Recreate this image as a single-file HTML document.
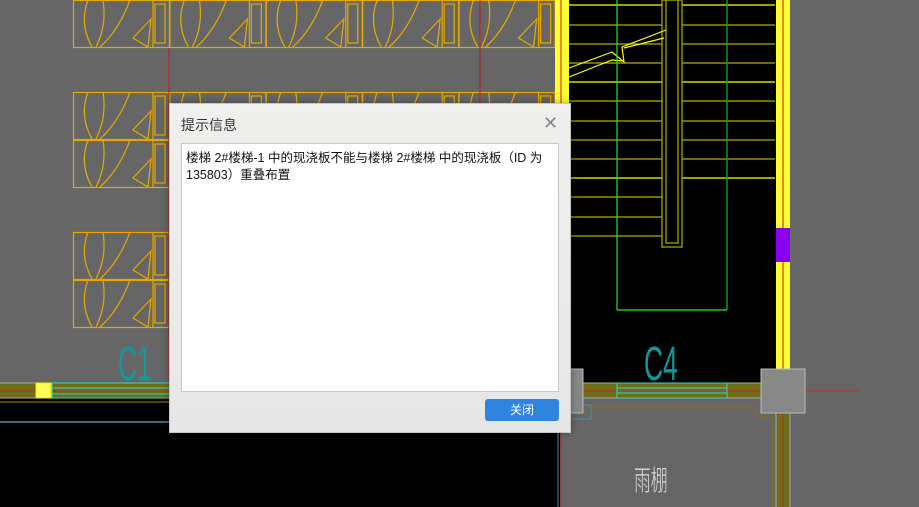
<!DOCTYPE html>
<html><head><meta charset="utf-8"><style>
html,body{margin:0;padding:0;width:919px;height:507px;overflow:hidden;background:#666;}
svg{position:absolute;left:0;top:0}
.dlg{position:absolute;left:169px;top:103px;width:400px;height:328px;background:linear-gradient(#efefed,#e6e6e6);border:1px solid #c6c6c6;box-shadow:0 0 8px rgba(0,0,0,.35);font-family:"Liberation Sans","Noto Sans CJK SC",sans-serif;}
.title{position:absolute;left:11px;top:11px;font-size:14px;color:#333;}
.x{position:absolute;left:373px;top:9px;font-size:18px;color:#888;line-height:20px}
.ta{position:absolute;left:11px;top:39px;width:378px;height:249px;background:#fff;border:1px solid #c8c8c8;font-size:12.5px;color:#111;line-height:17px;padding:6px 0 0 4px;box-sizing:border-box;}
.btn{position:absolute;left:315px;top:295px;width:74px;height:22px;background:#2f84e0;border-radius:3px;color:#fff;font-size:12px;text-align:center;line-height:22px}
</style></head><body>
<svg width="919" height="507" viewBox="0 0 919 507">
<defs>
<g id="cell" fill="none" stroke="#e6a800" stroke-width="1.2">
<rect x="0.5" y="0.5" width="96" height="47"/>
<line x1="80" y1="0" x2="80" y2="48"/>
<rect x="82" y="4" width="10" height="39"/>
<path d="M15 0Q6 24 19 47M30 0Q34 25 23 47M57 0Q46 30 27 47M78 19L60 38L75 47Z"/>
</g>
<g id="row">
<use href="#cell" x="73"/><use href="#cell" x="169.4"/><use href="#cell" x="265.8"/><use href="#cell" x="362.2"/><use href="#cell" x="458.6"/>
</g>
</defs>
<use href="#row" y="0"/>
<use href="#row" y="92"/><use href="#row" y="140"/>
<use href="#row" y="232"/><use href="#row" y="280"/>
<rect x="569" y="0" width="207" height="383" fill="#000"/>
<g stroke="#ffff00" stroke-width="1.3">
<line x1="569" y1="5" x2="662" y2="5"/><line x1="682" y1="5" x2="775" y2="5"/>
<line x1="569" y1="82" x2="662" y2="82"/><line x1="682" y1="82" x2="775" y2="82"/>
<line x1="569" y1="178" x2="662" y2="178"/><line x1="682" y1="178" x2="775" y2="178"/>
</g>
<g stroke="#b0b000" stroke-width="1.2">
<line x1="569" y1="25" x2="662" y2="25"/><line x1="682" y1="25" x2="775" y2="25"/>
<line x1="569" y1="44" x2="662" y2="44"/><line x1="682" y1="44" x2="775" y2="44"/>
<line x1="569" y1="63" x2="662" y2="63"/><line x1="682" y1="63" x2="775" y2="63"/>
<line x1="569" y1="101" x2="662" y2="101"/><line x1="682" y1="101" x2="775" y2="101"/>
<line x1="569" y1="121" x2="662" y2="121"/><line x1="682" y1="121" x2="775" y2="121"/>
<line x1="569" y1="140" x2="662" y2="140"/><line x1="682" y1="140" x2="775" y2="140"/>
<line x1="569" y1="159" x2="662" y2="159"/><line x1="682" y1="159" x2="775" y2="159"/>
<line x1="569" y1="197" x2="662" y2="197"/>
<line x1="569" y1="217" x2="662" y2="217"/>
<line x1="569" y1="236" x2="662" y2="236"/>
<rect x="662" y="0" width="20" height="247" fill="none"/>
<rect x="666" y="0" width="12" height="243" fill="none"/>
</g>
<path d="M569 68L612 52L624 62L622 47L666 30M569 77L612 60L624 61M624 48L664 38" stroke="#ffff00" fill="none" stroke-width="1.2"/>
<line x1="617" y1="0" x2="617" y2="310" stroke="#33dd33" stroke-width="1.2"/>
<line x1="727" y1="0" x2="727" y2="310" stroke="#119911" stroke-width="1.5"/>
<line x1="617" y1="310" x2="727" y2="310" stroke="#119911" stroke-width="2"/>
<rect x="555" y="0" width="14" height="383" fill="#ffff33"/>
<line x1="561" y1="0" x2="561" y2="383" stroke="#d02020" stroke-width="1"/>
<rect x="776" y="0" width="14" height="369" fill="#ffff33"/>
<line x1="783" y1="0" x2="783" y2="369" stroke="#e06020" stroke-width="1.5"/>
<rect x="776" y="228" width="14" height="34" fill="#8800ee"/>
<line x1="169" y1="48" x2="169" y2="507" stroke="#c02020"/>
<line x1="480" y1="0" x2="480" y2="507" stroke="#c02020"/>
<rect x="0" y="398" width="560" height="109" fill="#000"/>
<rect x="561" y="398" width="215" height="109" fill="#666"/>
<rect x="0" y="383" width="776" height="15" fill="#6e6e1a"/>
<line x1="0" y1="383" x2="776" y2="383" stroke="#aaa"/>
<line x1="0" y1="398" x2="776" y2="398" stroke="#aaa"/>
<line x1="0" y1="391" x2="860" y2="391" stroke="#e02020"/>
<rect x="52" y="383" width="120" height="15" fill="none" stroke="#22ddcc"/>
<line x1="52" y1="388" x2="172" y2="388" stroke="#22ddcc"/>
<line x1="52" y1="394" x2="172" y2="394" stroke="#22ddcc"/>
<rect x="36" y="383" width="15" height="15" fill="#ffff55" stroke="#ee0"/>
<line x1="0" y1="402" x2="560" y2="402" stroke="#aa8800"/>
<line x1="0" y1="422" x2="560" y2="422" stroke="#3a6a7a" stroke-width="2"/>
<rect x="617" y="383" width="110" height="15" fill="none" stroke="#22ddcc"/>
<line x1="617" y1="388" x2="727" y2="388" stroke="#22ddcc"/>
<line x1="617" y1="393" x2="727" y2="393" stroke="#22ddcc"/>
<path d="M565 412L588 412L588 406L755 406L758 417L772 417L772 507" stroke="#8a6a20" fill="none" stroke-width="1.2"/>
<path d="M583 405L591 405L591 419L563 419" stroke="#4a8aa8" fill="none"/>
<line x1="558" y1="419" x2="558" y2="507" stroke="#4a8aa8"/>
<line x1="561" y1="419" x2="561" y2="507" stroke="#c02020"/>
<rect x="776" y="413" width="14" height="94" fill="#6e6e1a"/>
<line x1="783" y1="413" x2="783" y2="507" stroke="#d02020"/>
<line x1="776" y1="413" x2="776" y2="507" stroke="#aaa"/>
<line x1="790" y1="413" x2="790" y2="507" stroke="#aaa"/>
<rect x="570" y="369" width="13" height="44" fill="#888" stroke="#bbb"/>
<rect x="761" y="369" width="44" height="44" fill="#888" stroke="#bbb"/>
<g font-family="Liberation Sans" font-size="48" font-weight="100" fill="#119999">
<text transform="translate(118,380) scale(0.55,1)">C1</text>
<text transform="translate(644,380) scale(0.55,1)">C4</text>
</g>
<text transform="translate(634,490) scale(0.6,1)" font-family="Noto Sans CJK SC,sans-serif" font-size="28" font-weight="300" fill="#ddd">雨棚</text>
</svg>
<div class="dlg">
<div class="title">提示信息</div>
<div class="x">✕</div>
<div class="ta">楼梯 2#楼梯-1 中的现浇板不能与楼梯 2#楼梯 中的现浇板（ID 为<br>135803）重叠布置</div>
<div class="btn">关闭</div>
</div>
</body></html>
